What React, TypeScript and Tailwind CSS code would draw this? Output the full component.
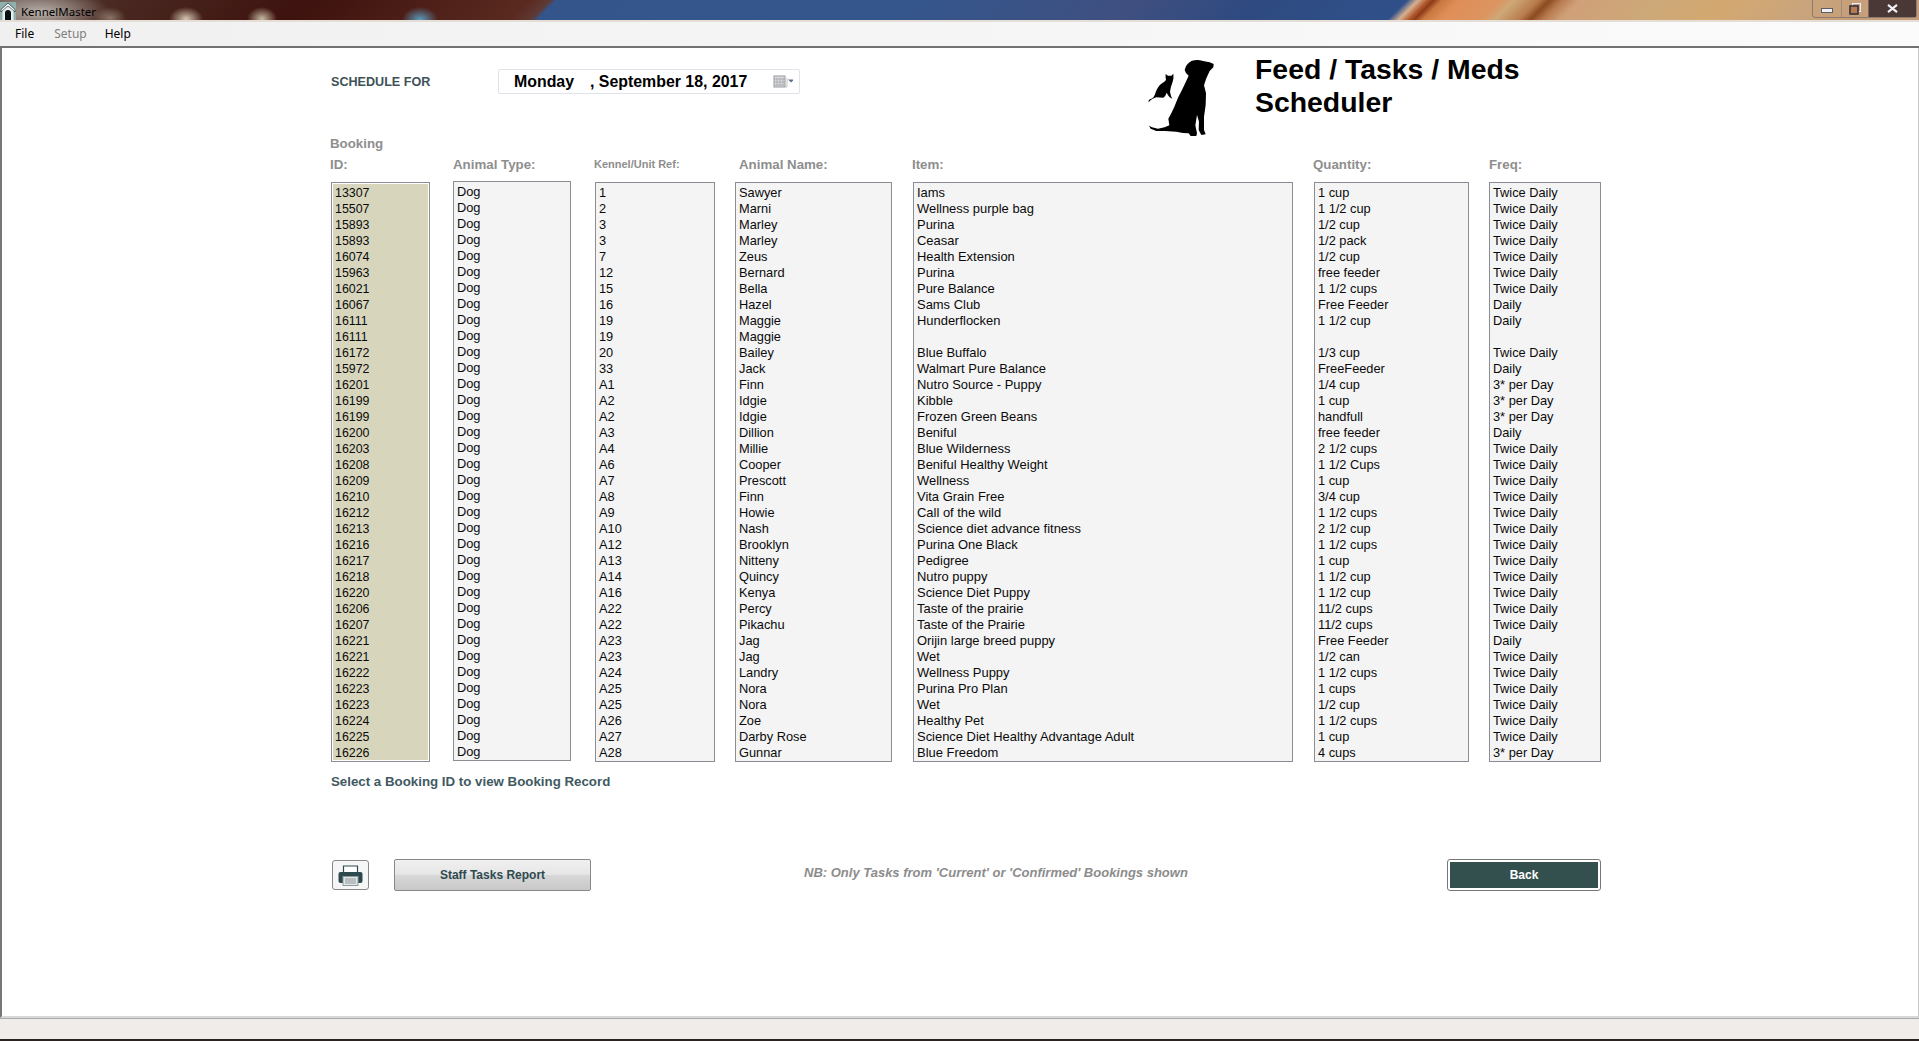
import { Fragment } from "react";

const ids = "13307,15507,15893,15893,16074,15963,16021,16067,16111,16111,16172,15972,16201,16199,16199,16200,16203,16208,16209,16210,16212,16213,16216,16217,16218,16220,16206,16207,16221,16221,16222,16223,16223,16224,16225,16226".split(",");
const kennels = "1,2,3,3,7,12,15,16,19,19,20,33,A1,A2,A2,A3,A4,A6,A7,A8,A9,A10,A12,A13,A14,A16,A22,A22,A23,A23,A24,A25,A25,A26,A27,A28".split(",");
const names = "Sawyer,Marni,Marley,Marley,Zeus,Bernard,Bella,Hazel,Maggie,Maggie,Bailey,Jack,Finn,Idgie,Idgie,Dillion,Millie,Cooper,Prescott,Finn,Howie,Nash,Brooklyn,Nitteny,Quincy,Kenya,Percy,Pikachu,Jag,Jag,Landry,Nora,Nora,Zoe,Darby Rose,Gunnar".split(",");
const items = [
  "Iams", "Wellness purple bag", "Purina", "Ceasar", "Health Extension", "Purina", "Pure Balance", "Sams Club", "Hunderflocken", "",
  "Blue Buffalo", "Walmart Pure Balance", "Nutro Source - Puppy", "Kibble", "Frozen Green Beans", "Beniful", "Blue Wilderness",
  "Beniful Healthy Weight", "Wellness", "Vita Grain Free", "Call of the wild", "Science diet advance fitness", "Purina One Black",
  "Pedigree", "Nutro puppy", "Science Diet Puppy", "Taste of the prairie", "Taste of the Prairie", "Orijin large breed puppy", "Wet",
  "Wellness Puppy", "Purina Pro Plan", "Wet", "Healthy Pet", "Science Diet Healthy Advantage Adult", "Blue Freedom",
];
const quantities = [
  "1 cup", "1 1/2 cup", "1/2 cup", "1/2 pack", "1/2 cup", "free feeder", "1 1/2 cups", "Free Feeder", "1 1/2 cup", "",
  "1/3 cup", "FreeFeeder", "1/4 cup", "1 cup", "handfull", "free feeder", "2 1/2 cups", "1 1/2 Cups", "1 cup", "3/4 cup",
  "1 1/2 cups", "2 1/2 cup", "1 1/2 cups", "1 cup", "1 1/2 cup", "1 1/2 cup", "11/2 cups", "11/2 cups", "Free Feeder", "1/2 can",
  "1 1/2 cups", "1 cups", "1/2 cup", "1 1/2 cups", "1 cup", "4 cups",
];
const T = "Twice Daily";
const P = "3* per Day";
const D = "Daily";
const freqs = [
  T, T, T, T, T, T, T, D, D, "", T, D, P, P, P, D,
  T, T, T, T, T, T, T, T, T, T, T, T, D, T, T, T, T, T, T, P,
];

function ListBox({ rows, className }: { rows: string[]; className: string }) {
  return (
    <div className={`h-[580px] border border-[#8b8c94] ${className}`}>
      {rows.map((row, i) => (
        <div key={i} className="h-4 leading-4 whitespace-pre">
          {row}
        </div>
      ))}
    </div>
  );
}

function DogAndCat() {
  return (
    <svg viewBox="0 0 300 270" className="w-[100px] h-[90px]" fill="#000">
      <path d="M197 42 L185 37 L165 33 Q148 27 130 33 Q114 42 110 60 Q112 70 122 77 L113 97 L103 118 L90 143 L80 168 L70 190 L61 206 L64 226 L50 232 L30 236 L12 232 L3 227 L8 236 L25 243 L50 243 L85 245 L105 249 L122 250 L128 258 L145 258 L147 250 L142 226 L147 195 L153 215 L152 240 L160 255 L173 253 L168 240 L168 200 L173 165 L174 130 L168 106 L175 85 L185 63 L196 52 Z" />
      <path d="M2 157 Q0 148 10 146 Q18 144 22 130 Q28 110 42 100 Q50 96 54 90 Q52 80 53 72 L60 77 L70 77 L76 71 Q78 85 74 95 Q68 110 66 125 Q68 138 73 146 L65 142 Q60 136 56 128 Q52 140 46 143 L25 142 Q12 146 6 152 Z" />
    </svg>
  );
}

function PrinterIcon() {
  return (
    <svg viewBox="0 0 25 21" className="w-[25px] h-[21px]">
      <path d="M5.5 7V1h14v6" fill="#fff" stroke="#2c4a4e" strokeWidth="1.2" />
      <rect x="0.5" y="7" width="24" height="11" rx="2" fill="#2c4a4e" />
      <rect x="5" y="11.5" width="15" height="9" fill="#e4e6e6" stroke="#8a9a9c" strokeWidth="1" />
      <path d="M7 14h11M7 16h11M7 18h11" stroke="#8a9a9c" strokeWidth="1" />
    </svg>
  );
}

function CalendarIcon() {
  return (
    <svg viewBox="0 0 20 13" className="w-5 h-[13px]">
      <rect x="1" y="1" width="11" height="11" fill="#d9dbdf" stroke="#9a9a9a" />
      <path d="M1 4h11M1 7h11M1 10h11M4 3v8M7 3v8M10 3v8" stroke="#a6a8ad" strokeWidth="0.8" />
      <path d="M13 12h1V3" fill="none" stroke="#c4c4c4" />
      <path d="M15 4.5h6l-3 3z" fill="#5a6f92" />
    </svg>
  );
}

function HouseIcon() {
  return (
    <svg viewBox="0 0 16 18" className="w-4 h-[18px]">
      <rect width="16" height="18" fill="#8fb0ad" />
      <path d="M8 1 15 7.5V10L8 4 1 10V7.5Z" fill="#f4f8f8" stroke="#1c2b2b" strokeWidth="0.7" />
      <path d="M2.5 18V9L8 4.5 13.5 9v9Z" fill="#e9efee" />
      <path d="M5 18v-7a3 3 0 0 1 6 0v7Z" fill="#071010" />
    </svg>
  );
}

const columns = [
  { key: "id", width: "w-[99px]", gap: "", label: "ID:", labelClass: "-ml-px text-[13.3px]", rows: ids, boxClass: "bg-[#d7d6bd] pl-[3px] pt-0.5 text-[12.4px] outline outline-1 -outline-offset-2 outline-white" },
  { key: "type", width: "w-[118px]", gap: "ml-[23px]", label: "Animal Type:", labelClass: "text-[13.3px]", rows: ids.map(() => "Dog"), boxClass: "bg-[#f4f4f4] pl-[3px] pt-0.5 text-[12.8px] -mt-px" },
  { key: "kennel", width: "w-[120px]", gap: "ml-6", label: "Kennel/Unit Ref:", labelClass: "-ml-px text-[11px]", rows: kennels, boxClass: "bg-[#f4f4f4] pl-[3px] pt-0.5 text-[12.8px]" },
  { key: "name", width: "w-[157px]", gap: "ml-5", label: "Animal Name:", labelClass: "ml-1 text-[13.3px]", rows: names, boxClass: "bg-[#f4f4f4] pl-[3px] pt-0.5 text-[12.8px]" },
  { key: "item", width: "w-[380px]", gap: "ml-[21px]", label: "Item:", labelClass: "-ml-px text-[13.3px]", rows: items, boxClass: "bg-[#f4f4f4] pl-[3px] pt-0.5 text-[12.95px]" },
  { key: "qty", width: "w-[155px]", gap: "ml-[21px]", label: "Quantity:", labelClass: "-ml-px text-[13.3px]", rows: quantities, boxClass: "bg-[#f4f4f4] pl-[3px] pt-0.5 text-[12.8px]" },
  { key: "freq", width: "w-[112px]", gap: "ml-5", label: "Freq:", labelClass: "text-[13.3px]", rows: freqs, boxClass: "bg-[#f4f4f4] pl-[3px] pt-0.5 text-[12.8px]" },
];

export default function App() {
  return (
    <div className="w-[1919px] h-[1041px] overflow-hidden flex flex-col bg-white text-[12px] text-[#0a0a0a] font-['Liberation_Sans',sans-serif]">
      {/* Title bar, blurred wallpaper behind it */}
      <div className="h-5 shrink-0 flex items-start justify-between bg-[radial-gradient(ellipse_70px_24px_at_40px_12px,#b8b0aa,transparent),radial-gradient(ellipse_16px_11px_at_110px_18px,#8a7466,transparent),radial-gradient(ellipse_17px_12px_at_186px_19px,#d4c6b0,transparent),radial-gradient(ellipse_15px_12px_at_262px_19px,#c8baa0,transparent),radial-gradient(ellipse_18px_13px_at_420px_20px,#5a9bc0,transparent),linear-gradient(135deg,#5e4a44_7px,#4a2a22_78px,#3e120e_219px,#5a2a20_375px,#5e3a34_389px,#33558c_394px,#34568c_643px,#3f4f80_806px,#2e4a80_891px,#30508a_995px,#d8b090_1003px,#b0582c_1010px,#8e3c18_1014px,#c87840_1020px,#e08e58_1032px,#dc9560_1061px,#cfa878_1071px,#b87c4c_1088px,#8c4a20_1096px,#b87c50_1105px,#d0a078_1117px,#cca878_1174px,#d4a870_1223px,#c9a47c_1280px,#c49a78_1364px)]">
        <div className="flex items-center">
          <HouseIcon />
          <span className="ml-[5px] pt-0.5 text-[11.5px] leading-5 text-black font-['Noto_Sans',sans-serif]">KennelMaster</span>
        </div>
        <div className="flex h-[18px] mr-0.5 border-x border-b border-[#8d7b70] rounded-b-[4px]">
          <div className="w-[29px] border-r border-[#a08c7c] flex items-center justify-center pt-[3px]">
            <div className="w-3 h-[5px] bg-[#f2f2f4] border border-[#5d5d68]" />
          </div>
          <div className="w-[27px] border-r border-[#7a6a60] flex items-center justify-center">
            <svg viewBox="0 0 12 12" className="w-3 h-3">
              <rect x="3.5" y="0.5" width="8" height="8" fill="none" stroke="#eef" />
              <rect x="1" y="3" width="8" height="8" fill="#b87a50" stroke="#34343e" strokeWidth="1.6" />
            </svg>
          </div>
          <div className="w-[47px] bg-[#4a3836] flex items-center justify-center">
            <svg viewBox="0 0 12 10" className="w-[11px] h-[9px]">
              <path d="M1 1l10 8M11 1L1 9" stroke="#f2f2f4" strokeWidth="2.4" />
            </svg>
          </div>
        </div>
      </div>
      <div className="h-0.5 shrink-0 bg-[#e4ded6]" />

      {/* Menu bar */}
      <div className="h-[26px] shrink-0 flex items-center pl-[15px] border-b-2 border-[#727272] bg-gradient-to-r from-[#f0f0f0] to-[#fbfbfb] font-['Noto_Sans',sans-serif]">
        <span className="text-black">File</span>
        <span className="ml-[20px] text-[#808080]">Setup</span>
        <span className="ml-[18px] text-black">Help</span>
      </div>

      {/* Main panel */}
      <main className="flex-1 border-l-2 border-l-[#777] border-r border-r-[#c8c8c8] border-b-2 border-b-[#d8d8d8] pl-[329px]">
        <div className="h-[85px] flex items-start">
          <div className="w-[167px] mt-[25px] text-[12.6px] font-bold text-[#3e5258]">SCHEDULE FOR</div>
          <div className="w-[302px] h-[25px] mt-[21px] flex items-center pl-[15px] pr-[6px] border border-[#dfe3ea] rounded-[2px] text-[15.9px] font-bold text-black">
            <span className="w-[76px]">Monday</span>
            <span className="flex-1">, September 18, 2017</span>
            <CalendarIcon />
          </div>
          <div className="ml-[348px] mt-0.5">
            <DogAndCat />
          </div>
          <h1 className="ml-[7px] mt-[5px] text-[28.4px] leading-[33px] font-bold text-black">
            Feed / Tasks / Meds
            <br />
            Scheduler
          </h1>
        </div>

        <div className="flex">
          {columns.map((col) => (
            <Fragment key={col.key}>
              <div className={`${col.width} ${col.gap} shrink-0`}>
                <div className={`h-[49px] flex flex-col justify-end pb-[7px] font-bold text-[#8e8e8e] ${col.labelClass}`}>
                  {col.key === "id" && <div className="leading-[21px]">Booking</div>}
                  <div className="leading-[21px]">{col.label}</div>
                </div>
                <ListBox rows={col.rows} className={col.boxClass} />
              </div>
            </Fragment>
          ))}
        </div>

        <div className="mt-[12px] text-[13.3px] leading-4 font-bold text-[#3f5a62]">Select a Booking ID to view Booking Record</div>

        <div className="w-[1270px] mt-[69px] flex items-start">
          <button className="w-[37px] h-[30px] ml-px mt-px flex items-center justify-center rounded-[3px] border border-[#888] bg-[#f6f6f6]">
            <PrinterIcon />
          </button>
          <button className="w-[197px] h-8 ml-[25px] rounded-[2px] border border-[#888] bg-[linear-gradient(#f0f0f0_0%,#e6e6e6_48%,#d8d8d8_50%,#c8c8c8_100%)] text-[12px] font-bold text-[#2f4a4f]">
            Staff Tasks Report
          </button>
          <span className="ml-[213px] mt-1.5 text-[13px] leading-4 italic font-bold text-[#8c8c8c]">
            NB: Only Tasks from 'Current' or 'Confirmed' Bookings shown
          </span>
          <button className="w-[154px] h-8 ml-auto p-0.5 rounded-[3px] border border-[#777] bg-white">
            <span className="w-full h-full flex items-center justify-center bg-[#33504f] text-[12px] font-bold text-white">Back</span>
          </button>
        </div>
      </main>

      {/* Status bar */}
      <div className="h-[23px] shrink-0 border-t border-[#aaa] bg-[#efecea] flex flex-col justify-end">
        <div className="h-0.5 bg-[#2a2322]" />
      </div>
    </div>
  );
}
